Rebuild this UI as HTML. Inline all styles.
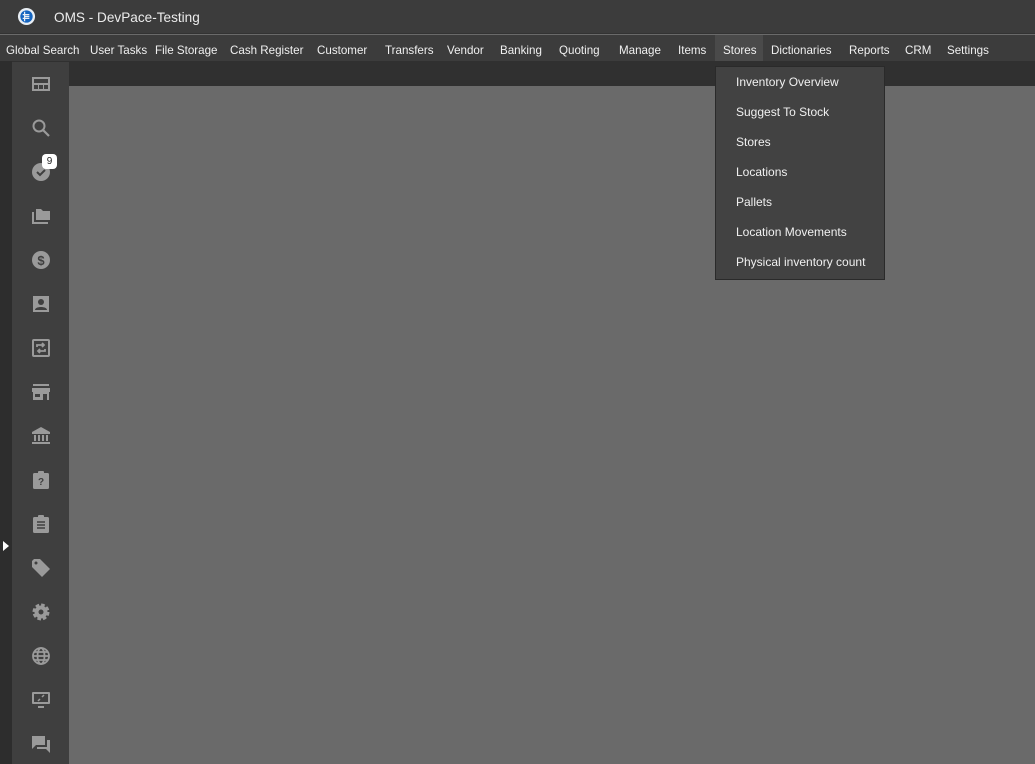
<!DOCTYPE html>
<html><head><meta charset="utf-8"><style>
*{margin:0;padding:0;box-sizing:border-box}
body{width:1035px;height:764px;overflow:hidden;background:#6a6a6a;font-family:"Liberation Sans","DejaVu Sans",sans-serif;color:#f0f0f0;position:relative}
.title{position:absolute;left:0;top:0;width:1035px;height:34px;background:#3c3c3c;border-bottom:1px solid #333}
.title span{position:absolute;left:54px;top:10px;font-size:13.6px;color:#ececec}
.menu{position:absolute;left:0;top:35px;width:1035px;height:26px;background:#3c3c3c;font-size:11.6px}
.menu span{position:absolute;top:9px;white-space:nowrap}
.menu .act{background:#4a4a4a;top:0;height:26px;padding-top:9px}
.strip{position:absolute;left:0;top:61px;width:1035px;height:25px;background:#303030}
.left{position:absolute;left:0;top:61px;width:12px;height:703px;background:#2d2d2d}
.side{position:absolute;left:12px;top:62px;width:57px;height:702px;background:#3f3f3f}
.ic{position:absolute;left:31px;width:20px;height:20px}
.dd{position:absolute;left:715px;top:66px;width:170px;height:214px;background:#424242;border:1px solid #2a2a2a;font-size:12px}
.dd div{position:absolute;left:20px;white-space:nowrap}
</style></head><body>
<div class="title">
<svg style="position:absolute;left:17px;top:7px" width="19" height="19" viewBox="0 0 20 20"><circle cx="10" cy="10" r="9" fill="#e8eef4"/><circle cx="10" cy="10" r="6.5" fill="#1565c0"/><path d="M8 5v10M6 8h7M6 12h7M8 10h5" stroke="#e8eef4" stroke-width="1.3"/></svg>
<span>OMS - DevPace-Testing</span></div>
<div class="menu">
<span style="left:6px">Global Search</span><span style="left:90px">User Tasks</span><span style="left:155px">File Storage</span><span style="left:230px">Cash Register</span><span style="left:317px">Customer</span><span style="left:385px">Transfers</span><span style="left:447px">Vendor</span><span style="left:500px">Banking</span><span style="left:559px">Quoting</span><span style="left:619px">Manage</span><span style="left:678px">Items</span><span class="act" style="left:715px;width:48px;padding-left:8px">Stores</span><span style="left:771px">Dictionaries</span><span style="left:849px">Reports</span><span style="left:905px">CRM</span><span style="left:947px">Settings</span>
</div>
<div class="strip"></div>
<div class="left"><svg style="position:absolute;left:3px;top:480px" width="6" height="10"><path d="M0 0L6 5L0 10z" fill="#fff"/></svg></div>
<div class="side"></div>
<svg class="ic" style="top:74px" viewBox="0 0 20 20" fill="#9a9a9a"><path d="M1 3h18v14H1zM3 5v4h14V5zM3 11v4h4v-4zm5 0v4h4v-4zm5 0v4h4v-4z" fill-rule="evenodd"/></svg>
<svg class="ic" style="top:118px" viewBox="0 0 20 20"><circle cx="8" cy="8" r="5.5" stroke="#9a9a9a" stroke-width="2" fill="none"/><path d="M12 12l6 6" stroke="#9a9a9a" stroke-width="2.2"/></svg>
<svg class="ic" style="top:162px" viewBox="0 0 20 20"><circle cx="10" cy="10" r="9" fill="#9a9a9a"/><path d="M6 10l3 3 5-5" stroke="#3f3f3f" stroke-width="2" fill="none"/></svg>
<div style="position:absolute;left:42px;top:154px;width:15px;height:15px;background:#fff;border-radius:4px;color:#222;font-size:10px;text-align:center;line-height:15px">9</div>
<svg class="ic" style="top:206px" viewBox="0 0 20 20" fill="#9a9a9a"><path d="M1 6h2v10h14v2H1zM5 3h5l2 2h7v9H5z"/></svg>
<svg class="ic" style="top:250px" viewBox="0 0 20 20"><circle cx="10" cy="10" r="9" fill="#9a9a9a"/><text x="10" y="15" font-size="13" font-weight="bold" text-anchor="middle" fill="#3f3f3f" font-family="Liberation Sans">$</text></svg>
<svg class="ic" style="top:294px" viewBox="0 0 20 20" fill="#9a9a9a"><path d="M2 2h16v16H2z"/><circle cx="10" cy="8" r="3" fill="#3f3f3f"/><path d="M4 16c0-4 12-4 12 0z" fill="#3f3f3f"/></svg>
<svg class="ic" style="top:338px" viewBox="0 0 20 20"><rect x="1" y="1" width="18" height="18" rx="2" fill="#9a9a9a"/><rect x="3" y="3" width="14" height="14" fill="#3f3f3f"/><path d="M6 9V7h7M11 5l2 2-2 2M14 11v2H7M9 11l-2 2 2 2" stroke="#9a9a9a" stroke-width="1.8" fill="none"/></svg>
<svg class="ic" style="top:382px" viewBox="0 0 20 20" fill="#9a9a9a"><path d="M2 2h16v2H2zM1 6h18v4h-1v8h-2v-6h-4v6H2v-8H1zM4 12v3h5v-3z"/></svg>
<svg class="ic" style="top:426px" viewBox="0 0 20 20" fill="#9a9a9a"><path d="M10 1l9 5v2H1V6zM3 9h2v6H3zm4 0h2v6H7zm4 0h2v6h-2zm4 0h2v6h-2zM1 16h18v2H1z"/></svg>
<svg class="ic" style="top:470px" viewBox="0 0 20 20"><rect x="2" y="3" width="16" height="16" rx="1.5" fill="#9a9a9a"/><rect x="7" y="1" width="6" height="4" rx="1" fill="#9a9a9a"/><text x="10" y="15" font-size="10" font-weight="bold" text-anchor="middle" fill="#3f3f3f" font-family="Liberation Sans">?</text></svg>
<svg class="ic" style="top:514px" viewBox="0 0 20 20"><rect x="2" y="3" width="16" height="16" rx="1.5" fill="#9a9a9a"/><rect x="7" y="1" width="6" height="4" rx="1" fill="#9a9a9a"/><path d="M6 8h8M6 11h8M6 14h8" stroke="#3f3f3f" stroke-width="1.5"/></svg>
<svg class="ic" style="top:558px" viewBox="0 0 20 20" fill="#9a9a9a"><path d="M1 3v6l10 10 8-8L9 1H3z"/><circle cx="5" cy="5" r="1.5" fill="#3f3f3f"/></svg>
<svg class="ic" style="top:602px" viewBox="0 0 20 20"><circle cx="10" cy="10" r="6" fill="none" stroke="#9a9a9a" stroke-width="5" stroke-dasharray="3 1.7"/><circle cx="10" cy="10" r="6.5" fill="#9a9a9a"/><circle cx="10" cy="10" r="2.5" fill="#3f3f3f"/></svg>
<svg class="ic" style="top:646px" viewBox="0 0 20 20" fill="none" stroke="#9a9a9a" stroke-width="1.8"><circle cx="10" cy="10" r="8"/><ellipse cx="10" cy="10" rx="3.5" ry="8"/><path d="M2 10h16M3 6h14M3 14h14"/></svg>
<svg class="ic" style="top:690px" viewBox="0 0 20 20"><rect x="1" y="2" width="18" height="12" rx="1" fill="#9a9a9a"/><rect x="3" y="4" width="14" height="8" fill="#3f3f3f"/><path d="M7 16h6v2H7z" fill="#9a9a9a"/><path d="M7 11l2-2M11 7l2-2" stroke="#9a9a9a" stroke-width="1.5"/></svg>
<svg class="ic" style="top:734px" viewBox="0 0 20 20" fill="#9a9a9a"><path d="M1 2h13v9H5l-4 4zM16 6h3v13l-4-4H6v-2h10z"/></svg>
<div class="dd">
<div style="top:8px">Inventory Overview</div><div style="top:38px">Suggest To Stock</div><div style="top:68px">Stores</div><div style="top:98px">Locations</div><div style="top:128px">Pallets</div><div style="top:158px">Location Movements</div><div style="top:188px">Physical inventory count</div>
</div>
</body></html>
